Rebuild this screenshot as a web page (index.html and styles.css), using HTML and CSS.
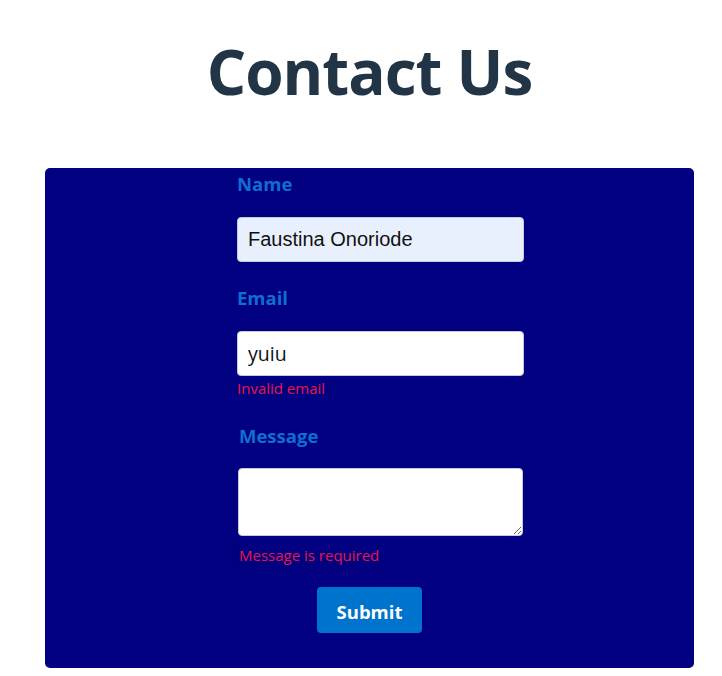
FILE: index.html
```html
<!DOCTYPE html>
<html lang="en">
<head>
<meta charset="utf-8">
<title>Contact Us</title>
<link rel="stylesheet" href="styles.css">
</head>
<body>
  <h1 class="title">Contact Us</h1>
  <div class="card">
    <form class="form">
      <label class="label" for="name">Name</label>
      <input class="field field-autofill" id="name" type="text" value="Faustina Onoriode">

      <label class="label label-gap" for="email">Email</label>
      <input class="field" id="email" type="text" value="yuiu">
      <div class="error">Invalid email</div>

      <label class="label label-gap label-msg" for="message">Message</label>
      <textarea class="field area" id="message"></textarea>
      <div class="error error-msg">Message is required</div>
    </form>
    <div class="actions">
      <button class="submit" type="button">Submit</button>
    </div>
  </div>
</body>
</html>
```
FILE: styles.css
```css
html, body {
  margin: 0;
  padding: 0;
  background: #ffffff;
}
body {
  font-family: "Open Sans", "Noto Sans", sans-serif;
  width: 722px;
}
.title {
  margin: 0;
  padding-top: 32px;
  height: 79px;
  line-height: 79px;
  text-align: center;
  font-size: 62px;
  font-weight: 700;
  color: #213547;
  padding-left: 17px;
  letter-spacing: -1px;
}
.card {
  margin: 57px 0 0 45px;
  width: 649px;
  background: #000080;
  border-radius: 5px;
  padding: 4px 0 35px;
  box-sizing: border-box;
}
.form {
  display: flex;
  flex-direction: column;
  align-items: flex-start;
  margin-left: 192px;
  width: 287px;
}
.label {
  display: block;
  font-size: 18.5px;
  line-height: 24px;
  font-weight: 700;
  color: #0f6ed2;
  margin-bottom: 21px;
}
.label-gap {
  margin-top: 24px;
}
.label-msg {
  margin-top: 26px;
  margin-left: 2px;
  margin-bottom: 20px;
}
.field {
  display: block;
  box-sizing: border-box;
  width: 287px;
  height: 45px;
  margin: 0;
  padding: 0 10px;
  border: 1px solid #c6c9d6;
  border-radius: 4px;
  background: #ffffff;
  font-family: "Open Sans", "Noto Sans", sans-serif;
  font-size: 19.5px;
  color: #111111;
  outline: none;
}
.field-autofill {
  background: #e8f0fe;
  font-family: "Liberation Sans", Arial, sans-serif;
  font-size: 20px;
  color: #111111;
}
.area {
  height: 68px;
  width: 285px;
  margin-left: 1px;
  resize: vertical;
}
.error {
  margin-top: 2px;
  font-size: 15px;
  line-height: 20px;
  color: #e8154a;
}
.error-msg {
  margin-top: 9px;
  margin-left: 2px;
}
.actions {
  display: flex;
  justify-content: center;
  margin-top: 22px;
}
.submit {
  width: 105px;
  height: 46px;
  border: none;
  border-radius: 4px;
  background: #0073cc;
  color: #ffffff;
  font-family: "Open Sans", "Noto Sans", sans-serif;
  font-size: 18.5px;
  font-weight: 700;
  padding: 2px 0 0;
  cursor: pointer;
}
```
